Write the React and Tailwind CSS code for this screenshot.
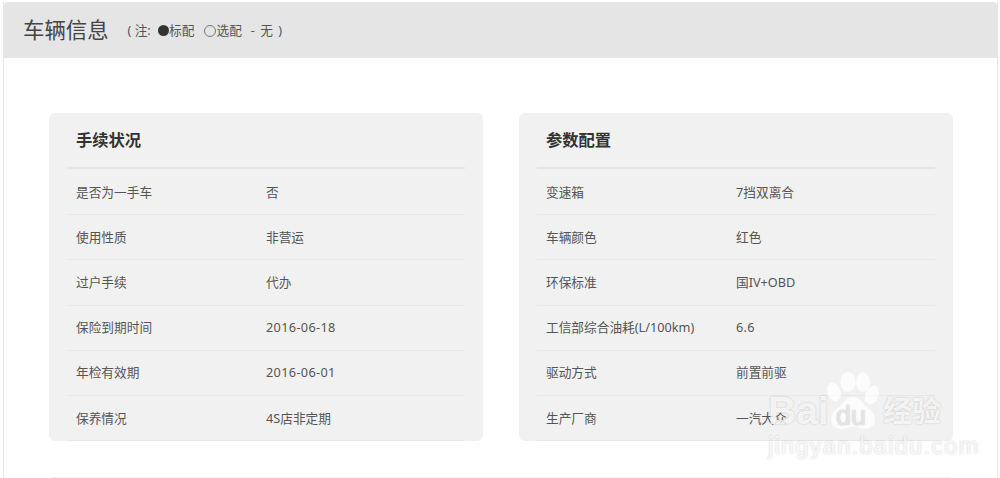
const left = {
  title: "手续状况",
  rows: [
    ["是否为一手车", "否"],
    ["使用性质", "非营运"],
    ["过户手续", "代办"],
    ["保险到期时间", "2016-06-18"],
    ["年检有效期", "2016-06-01"],
    ["保养情况", "4S店非定期"],
  ],
};

const right = {
  title: "参数配置",
  rows: [
    ["变速箱", "7挡双离合"],
    ["车辆颜色", "红色"],
    ["环保标准", "国IV+OBD"],
    ["工信部综合油耗(L/100km)", "6.6"],
    ["驱动方式", "前置前驱"],
    ["生产厂商", "一汽大众"],
  ],
};

const InfoCard = ({ data }) => {
  return (
    <div className="w-[434px] h-[328px] bg-[#f1f1f1] rounded-[6px] pl-[18px] pr-[18px]">
      <h3 className="h-[56px] border-b-2 border-[#e6e6e6] pl-[9px] pt-[15px] text-[16.3px] leading-[24px] font-bold text-[#333]">
        {data.title}
      </h3>
      <div className="pt-[1px]">
        {data.rows.map(([label, value]) => (
          <div
            key={label}
            className="flex h-[45.2px] items-center border-b border-[#e8e8e8] pl-[9px] text-[12.7px] text-[#555]"
          >
            <span className="w-[190px]">{label}</span>
            <span className={/^[\d.-]+$/.test(value) ? "tracking-[0.35px]" : ""}>{value}</span>
          </div>
        ))}
      </div>
    </div>
  );
};

const Watermark = () => {
  return (
    <div className="absolute left-[766px] top-[370px] h-[108px] w-[190px] text-white/80 [text-shadow:0_0_2px_rgba(0,0,0,0.22)]">
      <svg className="absolute left-[61px] top-[2px]" width="52" height="58" viewBox="0 0 52 58" fill="#fff" fillOpacity="0.75">
        <ellipse cx="7" cy="20" rx="6.5" ry="9.5" transform="rotate(-20 7 20)" />
        <ellipse cx="21" cy="10" rx="7.5" ry="10" />
        <ellipse cx="36" cy="10" rx="7" ry="10" />
        <ellipse cx="45" cy="23" rx="6.5" ry="9.5" transform="rotate(20 45 23)" />
        <path d="M26 25c-8 0-10 8-16 12-8 5-9 19 4 20 5 0 8-2 12-2s7 2 12 2c13-1 12-15 4-20-6-4-8-12-16-12z" />
      </svg>
      <span className="absolute left-[2px] top-[21px] text-[39px] leading-[40px] font-bold font-['Liberation_Sans',sans-serif]">Bai</span>
      <span className="absolute left-[70px] top-[33px] text-[27px] leading-[26px] text-[#e4e4e4] font-['Liberation_Sans',sans-serif]">du</span>
      <span className="absolute left-[117px] top-[21px] text-[29px] leading-[40px] font-bold">经验</span>
      <span className="absolute left-[2px] top-[64px] text-[23.5px] leading-[24px] tracking-[1.3px] whitespace-nowrap font-['Liberation_Sans',sans-serif]">jingyan.baidu.com</span>
    </div>
  );
};

const App = () => {
  return (
    <div className="relative h-[478px] w-[1000px] overflow-hidden bg-white pl-[3px] pr-[2px] pt-[2px] font-['Noto_Sans','Noto_Sans_CJK_SC',sans-serif]">
      <div className="h-[476px] border-x border-[#e6e6e6]">
        <div className="flex h-[56px] items-center rounded-t-[4px] bg-[#e5e5e5] pl-[19px]">
          <h2 className="text-[21.4px] text-[#444]">车辆信息</h2>
          <p className="ml-[19px] flex items-center pt-[2px] text-[12.7px] text-[#555]">
            <span>(&nbsp;注:&nbsp;</span>
            <span className="ml-[4px] h-[11px] w-[11px] rounded-full bg-[#333]"></span>
            <span>标配</span>
            <span className="ml-[10px] h-[12px] w-[12px] rounded-full border border-[#777]"></span>
            <span>选配</span>
            <span className="ml-[9px] tracking-[1px]">-&nbsp;无&nbsp;)</span>
          </p>
        </div>
        <div className="flex gap-[36px] pl-[45px] pt-[55px]">
          <InfoCard data={left} />
          <InfoCard data={right} />
        </div>
        <div className="ml-[48px] mt-[36px] w-[898px] border-t border-[#eeeeee]"></div>
      </div>
      <Watermark />
    </div>
  );
};

export default App;
